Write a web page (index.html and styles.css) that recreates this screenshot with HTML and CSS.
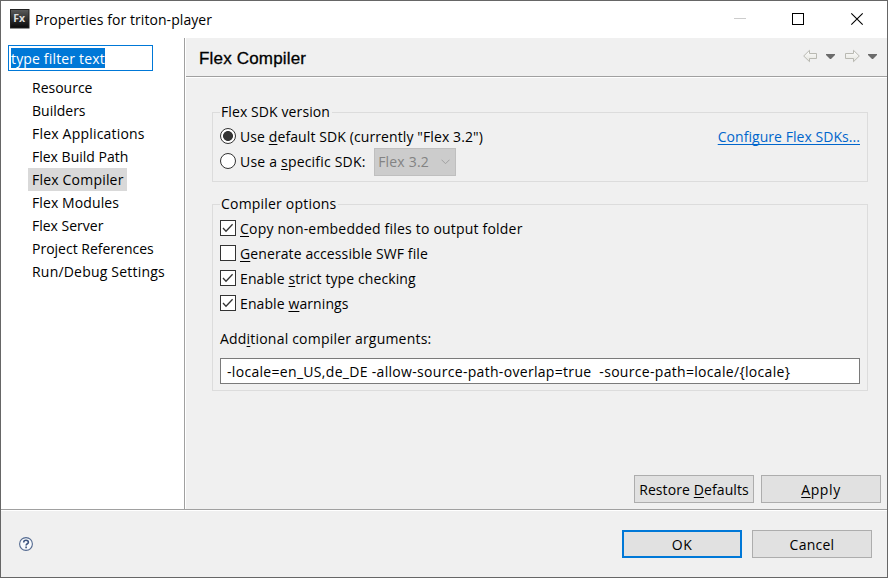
FILE: index.html
```html
<!DOCTYPE html>
<html lang="en">
<head>
<meta charset="utf-8">
<title>Properties for triton-player</title>
<link rel="stylesheet" href="styles.css">
</head>
<body>
<div class="window">
  <header class="titlebar">
    <svg class="app-icon" width="20" height="20" viewBox="0 0 20 20">
      <defs><linearGradient id="ig" x1="0" y1="0" x2="0" y2="1"><stop offset="0" stop-color="#5c5c5c"/><stop offset=".5" stop-color="#303030"/><stop offset="1" stop-color="#080808"/></linearGradient></defs>
      <rect x=".5" y=".5" width="18.5" height="18.5" fill="url(#ig)" stroke="#222"/>
      <text x="3.2" y="12.7" class="app-icon-text">Fx</text>
    </svg>
    <span class="title">Properties for triton-player</span>
    <svg class="win-controls" width="132" height="20" viewBox="0 0 132 20" fill="none">
      <path d="M0 9.5H12" stroke="#ccc"/>
      <rect x="58.5" y="4.5" width="11" height="11" stroke="#000"/>
      <path d="M117.3 4.3l11.4 11.4M128.7 4.3l-11.4 11.4" stroke="#000" stroke-width="1.1"/>
    </svg>
  </header>
  <div class="body">
    <nav class="sidebar">
      <div class="filter"><span class="selected-text">type filter text</span></div>
      <ul class="tree">
        <li><span class="ls0">Resource</span></li>
        <li><span class="ls0">Builders</span></li>
        <li><span class="ls2">Flex Applications</span></li>
        <li><span class="ls0">Flex Build Path</span></li>
        <li><span class="ls2 active">Flex Compiler</span></li>
        <li><span class="ls1">Flex Modules</span></li>
        <li><span class="ls0">Flex Server</span></li>
        <li><span class="ls0">Project References</span></li>
        <li><span class="ls2">Run/Debug Settings</span></li>
      </ul>
    </nav>
    <main class="page">
      <div class="page-head">
        <h1>Flex Compiler</h1>
        <svg width="76" height="14" viewBox="0 0 76 14">
          <defs><linearGradient id="ag" x1="0" y1="0" x2="0" y2="1"><stop offset="0" stop-color="#fff"/><stop offset="1" stop-color="#e2e2dc"/></linearGradient></defs>
          <path d="M.7 7L6.5 1.3V4.5H13.5V9.5H6.5V12.7Z" fill="url(#ag)" stroke="#b9b9b2" stroke-linejoin="round"/>
          <path d="M23 5h9v1l-4 4h-1l-4-4z" fill="#6b6b6b"/>
          <path d="M56.3 7L50.5 1.3V4.5H42.5V9.5H50.5V12.7Z" fill="url(#ag)" stroke="#b9b9b2" stroke-linejoin="round"/>
          <path d="M65 5h9v1l-4 4h-1l-4-4z" fill="#6b6b6b"/>
        </svg>
      </div>
      <div class="content">
        <fieldset class="sdk">
          <legend class="ls1">Flex SDK version</legend>
          <div class="row">
            <span class="radio on"></span><span class="ls1">Use <u>d</u>efault SDK (currently "Flex 3.2")</span>
            <a class="link">Configure Flex SDKs...</a>
          </div>
          <div class="row">
            <span class="radio"></span><span class="ls2">Use a <u>s</u>pecific SDK:</span>
            <span class="combo"><span class="ls2">Flex 3.2</span>
              <svg width="9" height="6" viewBox="0 0 9 6"><path d="M.5.7l4 4 4-4" fill="none" stroke="#a0a0a0"/></svg></span>
          </div>
        </fieldset>
        <fieldset class="options">
          <legend class="ls2">Compiler options</legend>
          <div class="row"><span class="check"><svg width="14" height="14" viewBox="0 0 14 14"><path d="M2 7l3 3.2L11.6 3.2"/></svg></span><span class="ls2"><u>C</u>opy non-embedded files to output folder</span></div>
          <div class="row"><span class="check"></span><span class="ls1"><u>G</u>enerate accessible SWF file</span></div>
          <div class="row"><span class="check"><svg width="14" height="14" viewBox="0 0 14 14"><path d="M2 7l3 3.2L11.6 3.2"/></svg></span><span class="ls1">Enable <u>s</u>trict type checking</span></div>
          <div class="row"><span class="check"><svg width="14" height="14" viewBox="0 0 14 14"><path d="M2 7l3 3.2L11.6 3.2"/></svg></span><span class="ls1">Enable <u>w</u>arnings</span></div>
          <div class="args-label ls2">Add<u>i</u>tional compiler arguments:</div>
          <div class="args">-locale=en_US,de_DE -allow-source-path-overlap=true  -source-path=locale/{locale}</div>
        </fieldset>
      </div>
      <div class="page-actions">
        <button class="ls1">Restore <u>D</u>efaults</button>
        <button class="ls6"><u>A</u>pply</button>
      </div>
    </main>
  </div>
  <footer class="footer">
    <svg width="16" height="16" viewBox="0 0 16 16">
      <circle cx="8" cy="8" r="6.4" fill="#f8fafc" stroke="#546a90" stroke-width="1.1"/>
      <path d="M5.7 6.4C5.7 3.6 10.4 3.6 10.4 6.2C10.4 7.8 8.1 7.7 8.1 9.5M8.1 10.6V12.2" fill="none" stroke="#3f557f" stroke-width="1.6"/>
    </svg>
    <div class="dialog-actions">
      <button class="primary ls6">OK</button>
      <button class="ls3">Cancel</button>
    </div>
  </footer>
</div>
</body>
</html>
```
FILE: styles.css
```css
* { box-sizing: border-box; }
body { margin: 0; }
.window {
  width: 888px; height: 578px;
  display: flex; flex-direction: column;
  border: 1px solid #666;
  background: #f0f0f0; color: #000;
  font: 14px/20px "Open Sans", "Noto Sans", sans-serif;
}
.ls0 { letter-spacing: 0; }
.ls1 { letter-spacing: .1px; }
.ls2 { letter-spacing: .2px; }
.ls3 { letter-spacing: .25px; }
.ls6 { letter-spacing: .6px; }
u { text-decoration: underline; text-decoration-thickness: 1px; text-underline-offset: 2px; text-decoration-skip-ink: none; }

.titlebar { height: 37px; flex: none; display: flex; align-items: center; background: #fff; padding: 0 20px 0 9px; }
.app-icon { margin-bottom: 2px; }
.app-icon-text { font: bold 10.5px "Open Sans", sans-serif; fill: #ddd; }
.title { margin-left: 5px; letter-spacing: .07px; }
.win-controls { margin-left: auto; margin-right: 1px; margin-bottom: 1px; }

.body { height: 472px; flex: none; display: flex; border-bottom: 1px solid #a0a0a0; }
.sidebar { width: 184px; background: #fff; border-right: 1px solid #a0a0a0; padding: 7px; }
.filter { width: 145px; height: 26px; border: 1px solid #0078d7; padding: 2px; background: #fff; }
.selected-text { display: inline-block; height: 20px; line-height: 22px; background: #0078d7; color: #fff; letter-spacing: .16px; }
.tree { list-style: none; margin: 5px 0 0; padding: 0 0 0 20px; }
.tree li { height: 23px; line-height: 23px; white-space: nowrap; }
.tree span { display: inline-block; padding: 0 4px; }
.tree .active { background: #d9d9d9; padding-right: 3px; }

.page { flex: 1; display: flex; flex-direction: column; border-left: 1px solid #fff; }
.page-head { height: 39px; flex: none; display: flex; justify-content: space-between; padding: 0 8px 0 13px; border-bottom: 1px solid #a0a0a0; box-shadow: 0 1px #fff; }
.page-head h1 { margin: 11px 0 0; font: 17px/20px "Liberation Sans", Arial, sans-serif; letter-spacing: .18px; -webkit-text-stroke: .3px #000; }
.page-head svg { margin-top: 11px; }

.content { padding: 25px 19px 0 26px; }
fieldset { margin: 0; border: 1px solid #dcdcdc; padding: 0 7px; min-width: 0; }
legend { padding: 0 2px 0 1px; height: 20px; }
.sdk { height: 80px; }
.options { height: 197px; margin-top: 12px; }
.row { height: 25px; display: flex; align-items: center; }
.sdk .row:first-of-type, .options .row:first-of-type { margin-top: 2px; }
.radio, .check { width: 16px; height: 16px; flex: none; margin-right: 4px; border: 1px solid #333; background: #fff; margin-bottom: 1px; }
.radio { border-radius: 50%; }
.radio.on { background: radial-gradient(circle, #333 4.6px, #fff 5.3px); }
.check svg { display: block; fill: none; stroke: #333; stroke-width: 1.3; }
.link { margin-left: auto; color: #0066cc; text-decoration: underline; text-underline-offset: 2px; text-decoration-thickness: 1px; text-decoration-skip-ink: none; letter-spacing: .05px; }
.combo { width: 82px; height: 28px; margin-left: 8.5px; padding: 0 5px 0 3px; display: flex; align-items: center; justify-content: space-between; background: #ccc; border: 1px solid #bfbfbf; color: #838383; }
.args-label { margin-top: 13px; }
.args { height: 26px; margin-top: 9px; padding: 2px 6px; background: #fff; border: 1px solid #7a7a7a; white-space: pre; letter-spacing: .31px; line-height: 22px; }

button { width: 120px; height: 28px; padding: 0; font-family: inherit; font-size: 14px; line-height: 20px; color: #000; background: #e1e1e1; border: 1px solid #adadad; border-radius: 0; }
button.primary { border: 2px solid #0078d7; }
.page-actions { margin-top: auto; display: flex; justify-content: flex-end; gap: 7px; padding: 0 6px 6px 0; }
.page-actions button { padding-top: 1px; }
.footer { flex: 1; display: flex; align-items: center; justify-content: space-between; padding: 0 15px 0 17px; border-top: 1px solid #fff; }
.dialog-actions { display: flex; gap: 10px; }
.dialog-actions button { padding-top: 1px; }
```
